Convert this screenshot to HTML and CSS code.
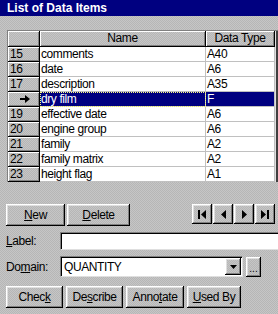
FILE: index.html
```html
<!DOCTYPE html>
<html lang="en">
<head>
  <meta charset="UTF-8" />
  <title>List of Data Items</title>
  <link rel="stylesheet" href="styles.css">
</head>
<body>
  <div class="titlebar">List of Data Items</div>

  <div class="grid">
    <div class="row head">
      <div class="rh"></div>
      <div class="hd">Name</div>
      <div class="hd">Data Type</div>
      <div class="edge"></div>
    </div>
    <div class="row"><div class="rh">15</div><div class="cell">comments</div><div class="cell">A40</div><div class="edge"></div></div>
    <div class="row"><div class="rh">16</div><div class="cell">date</div><div class="cell">A6</div><div class="edge"></div></div>
    <div class="row"><div class="rh">17</div><div class="cell">description</div><div class="cell">A35</div><div class="edge"></div></div>
    <div class="row selected">
      <div class="rh arrow">
        <svg width="10" height="8" viewBox="0 0 10 8"><path d="M0 3h5V0l5 4-5 4V5H0z" fill="#000"/></svg>
      </div>
      <div class="cell focus">dry film</div>
      <div class="cell">F</div>
      <div class="edge"></div>
    </div>
    <div class="row"><div class="rh">19</div><div class="cell">effective date</div><div class="cell">A6</div><div class="edge"></div></div>
    <div class="row"><div class="rh">20</div><div class="cell">engine group</div><div class="cell">A6</div><div class="edge"></div></div>
    <div class="row"><div class="rh">21</div><div class="cell">family</div><div class="cell">A2</div><div class="edge"></div></div>
    <div class="row"><div class="rh">22</div><div class="cell">family matrix</div><div class="cell">A2</div><div class="edge"></div></div>
    <div class="row"><div class="rh">23</div><div class="cell">height flag</div><div class="cell">A1</div><div class="edge"></div></div>
  </div>

  <div class="toolbar">
    <div class="group">
      <button class="btn w-new"><u>N</u>ew</button>
      <button class="btn w-delete"><u>D</u>elete</button>
    </div>
    <div class="nav">
      <button class="btn navbtn">
        <svg width="8" height="9" viewBox="0 0 8 9"><path d="M0 0h2v9H0z M8 0v9L3 4.5z" fill="#000"/></svg>
      </button>
      <button class="btn navbtn">
        <svg width="5" height="9" viewBox="0 0 5 9"><path d="M5 0v9L0 4.5z" fill="#000"/></svg>
      </button>
      <button class="btn navbtn">
        <svg width="5" height="9" viewBox="0 0 5 9"><path d="M0 0v9l5-4.5z" fill="#000"/></svg>
      </button>
      <button class="btn navbtn">
        <svg width="8" height="9" viewBox="0 0 8 9"><path d="M0 0v9l5-4.5z M6 0h2v9H6z" fill="#000"/></svg>
      </button>
    </div>
  </div>

  <div class="field label-row">
    <span class="caption"><u>L</u>abel:</span>
    <div class="input wide"></div>
  </div>

  <div class="field domain-row">
    <span class="caption">Do<u>m</u>ain:</span>
    <div class="input combo">
      <span class="value">QUANTITY</span>
      <span class="btn drop">
        <svg width="7" height="4" viewBox="0 0 7 4"><path d="M0 0h7L3.5 4z" fill="#000"/></svg>
      </span>
    </div>
    <button class="btn more">...</button>
  </div>

  <div class="actions">
    <button class="btn w-check">Chec<u>k</u></button>
    <button class="btn w-describe">De<u>s</u>cribe</button>
    <button class="btn w-annotate">Anno<u>t</u>ate</button>
    <button class="btn w-usedby"><u>U</u>sed By</button>
  </div>
</body>
</html>
```

FILE: styles.css
```css
body {
  margin: 0;
  width: 278px;
  height: 314px;
  overflow: hidden;
  font-family: "Liberation Sans", Arial, sans-serif;
  font-size: 12px;
  letter-spacing: -0.4px;
  color: #000;
  background: repeating-conic-gradient(#c6c6c6 0 25%, #b6b6b6 0 50%) 0 0 / 2px 2px;
}
.titlebar {
  height: 16px;
  line-height: 16px;
  padding-left: 7px;
  background-color: #000080;
  color: white;
  font-weight: bold;
  letter-spacing: 0;
}

/* data grid */
.grid {
  margin: 14px 0 0 7px;
  border-top: 1px solid #808080;
  border-left: 1px solid #808080;
  width: 271px;
}
.row {
  display: grid;
  grid-template-columns: 32px 166px 69px 3px;
  height: 15px;
}
.head {
  height: 16px;
}
.rh, .hd {
  box-sizing: border-box;
  background: repeating-conic-gradient(#c6c6c6 0 25%, #b6b6b6 0 50%) 0 0 / 2px 2px;
  box-shadow: inset 1px 1px #fff, inset -1px -1px #808080;
  border-right: 1px solid #000;
  border-bottom: 1px solid #000;
  line-height: 14px;
}
.rh {
  padding-left: 2px;
}
.hd {
  text-align: center;
}
.cell {
  box-sizing: border-box;
  background: #fff;
  border-right: 1px solid #c0c0c0;
  border-bottom: 1px solid #c0c0c0;
  padding-left: 1px;
  line-height: 14px;
  white-space: nowrap;
  overflow: hidden;
}
.edge {
  background: linear-gradient(to right, #dfdfdf 1px, #404040 1px);
}
.arrow {
  display: flex;
  align-items: center;
  justify-content: center;
}
.selected .cell {
  background: #000080;
  color: #fff;
}
.focus {
  outline: 1px dotted #ffff80;
  outline-offset: -1px;
}

/* buttons */
.btn {
  box-sizing: border-box;
  font: inherit;
  letter-spacing: inherit;
  color: #000;
  padding: 0;
  border: none;
  background: repeating-conic-gradient(#c6c6c6 0 25%, #b6b6b6 0 50%) 0 0 / 2px 2px;
  box-shadow: inset -1px -1px #000, inset 1px 1px #fff, inset -2px -2px #808080, inset 2px 2px #dfdfdf;
  display: flex;
  align-items: center;
  justify-content: center;
  height: 22px;
}
.toolbar {
  display: flex;
  justify-content: space-between;
  margin: 22px 3px 0 6px;
}
.group {
  display: flex;
  gap: 2px;
}
.w-new { width: 59px; }
.w-delete { width: 63px; }
.nav {
  display: flex;
  gap: 1px;
}
.navbtn {
  width: 20px;
  height: 20px;
}

/* form fields */
.field {
  display: flex;
  align-items: center;
  padding-left: 6px;
}
.caption {
  width: 54px;
  flex: none;
}
.label-row {
  margin-top: 6px;
  height: 18px;
}
.domain-row {
  margin-top: 6px;
  height: 21px;
}
.input {
  box-sizing: border-box;
  background: #fff;
  border: 1px solid;
  border-color: #808080 #dfdfdf #dfdfdf #808080;
  box-shadow: inset 1px 1px #000;
  height: 100%;
}
.wide {
  width: 230px;
  flex: none;
}
.combo {
  width: 183px;
  flex: none;
  display: flex;
  align-items: center;
  justify-content: space-between;
  padding: 0 1px 0 3px;
}
.drop {
  width: 16px;
  height: 17px;
}
.more {
  width: 15px;
  height: 20px;
  flex: none;
  margin-left: 3px;
  align-items: flex-end;
  padding-bottom: 5px;
  font-size: 10px;
  line-height: 6px;
  letter-spacing: 0;
}

.actions {
  display: flex;
  gap: 3px;
  margin: 9px 0 0 6px;
}
.w-check { width: 57px; }
.w-describe { width: 57px; }
.w-annotate { width: 58px; }
.w-usedby { width: 54px; }
u {
  text-decoration-thickness: 1px;
  text-underline-offset: 1px;
}
```
